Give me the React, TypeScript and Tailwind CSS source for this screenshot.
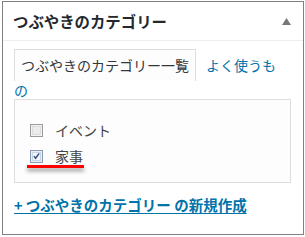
import React from 'react';

const jp = { fontFamily: '"Noto Sans CJK JP", "Noto Sans", sans-serif' };

function Checkbox({ checked }: { checked?: boolean }) {
  return (
    <span
      className={
        'w-[13px] h-[13px] shrink-0 border flex items-center justify-center ' +
        (checked ? 'border-[#8a9bb5] bg-[#e9eef5]' : 'border-[#9a9a9a] bg-[#f3f3f3]')
      }
    >
      <span
        className={
          'w-[9px] h-[9px] border flex items-center justify-center ' +
          (checked ? 'border-[#c9d4e4] bg-[#f4f6fa]' : 'border-[#dcdcdc] bg-[#ececec]')
        }
      >
        {checked && (
          <svg width="8" height="8" viewBox="0 0 8 8">
            <path d="M1 4.2 L3 6.6 L7 1" fill="none" stroke="#2f4b85" strokeWidth="1.6" />
          </svg>
        )}
      </span>
    </span>
  );
}

export default function App() {
  return (
    <div className="w-[305px] h-[237px] bg-white pt-[1px] pl-[2px]" style={jp}>
      <div className="w-[302px] h-[234px] border border-[#808080] bg-white">
        {/* header */}
        <div className="h-[39px] border-b border-[#eeeeee] flex items-center justify-between pl-[10px] pr-[12px]">
          <h2 className="text-[15.4px] font-bold text-[#23282d] leading-[19px]">つぶやきのカテゴリー</h2>
          <svg width="9" height="7" viewBox="0 0 9 7">
            <polygon points="4.5,0 9,7 0,7" fill="#72777c" />
          </svg>
        </div>

        <div className="pl-[11px] pr-[12px] pt-[8px]">
          {/* tabs */}
          <div className="mr-[3px] text-[14px] leading-[19px]">
            <span className="inline-block border border-b-0 border-[#dddddd] px-[6px] pt-[6px] pb-[6px] text-[#32373c] bg-[#fdfdfd]">
              つぶやきのカテゴリー一覧
            </span>
            <span className="ml-[10px] text-[#0073aa]">よく使うもの</span>
          </div>

          {/* panel */}
          <div className="-mt-[1px] h-[84px] border border-[#dddddd] bg-[#fdfdfd] pl-[15px] pt-[17px]">
            <div className="h-[26px] flex items-center gap-[12px] text-[14px] text-[#444444]">
              <Checkbox />
              <span>イベント</span>
            </div>
            <div className="relative h-[26px] flex items-center gap-[12px] text-[14px] text-[#444444]">
              <Checkbox checked />
              <span>家事</span>
              <span className="absolute left-[-3px] top-[22px] w-[57px] h-[3px] bg-[#ff0000] shadow-[0_3px_4px_rgba(0,0,0,0.45)]" />
            </div>
          </div>

          {/* add new */}
          <div className="mt-[12px] text-[14.5px] leading-[19px]">
            <a href="#" className="font-bold text-[#0073aa] underline underline-offset-[2px]">
              + つぶやきのカテゴリー の新規作成
            </a>
          </div>
        </div>
      </div>
    </div>
  );
}
